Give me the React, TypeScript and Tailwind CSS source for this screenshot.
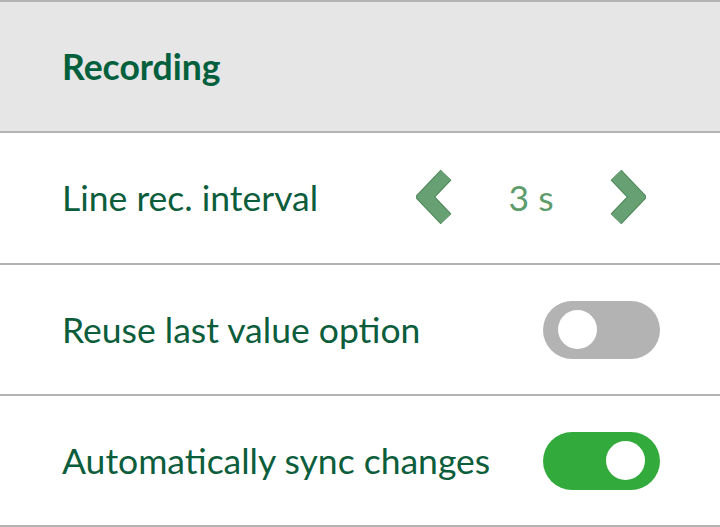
import { useState } from 'react'

function Chevron({ dir }: { dir: 'left' | 'right' }) {
  const pts = dir === 'left' ? '30,6 9,28 30,50' : '10,6 31,28 10,50'
  return (
    <svg width="40" height="58" viewBox="0 0 40 58" className="block">
      <polyline points={pts} fill="none" stroke="#4e8759" strokeWidth="15" strokeLinejoin="miter" strokeLinecap="butt" />
      <polyline points={pts} fill="none" stroke="#67a072" strokeWidth="13" strokeLinejoin="miter" strokeLinecap="butt" />
    </svg>
  )
}

function Toggle({ on, onChange }: { on: boolean; onChange: () => void }) {
  return (
    <button
      onClick={onChange}
      className={`flex h-[58px] w-[117px] items-center rounded-full px-[15px] ${on ? 'justify-end bg-[#33aa3c]' : 'justify-start bg-[#b3b3b3]'}`}
    >
      <span className="block h-[39px] w-[39px] rounded-full bg-white" />
    </button>
  )
}

export default function App() {
  const [interval, setInterval] = useState(3)
  const [reuse, setReuse] = useState(false)
  const [sync, setSync] = useState(true)

  return (
    <div className="w-[720px] h-[527px] overflow-hidden bg-white text-[#0b5d3b]" style={{ fontFamily: 'Lato, "Open Sans", sans-serif' }}>
      <div className="flex h-[133px] items-center border-y-2 border-[#b3b3b3] bg-[#e6e6e6] pl-[62px]">
        <h2 className="text-[35.5px] font-bold text-[#03603d]">Recording</h2>
      </div>

      <div className="flex h-[132px] items-center justify-between border-b-2 border-[#b3b3b3] pl-[62px] pr-[74px]">
        <span className="text-[35.5px]">Line rec. interval</span>
        <div className="flex items-center">
          <button onClick={() => setInterval(Math.max(1, interval - 1))}>
            <Chevron dir="left" />
          </button>
          <span className="w-[150px] text-center text-[35.5px] text-[#5f9c6c]">{interval} s</span>
          <button onClick={() => setInterval(interval + 1)}>
            <Chevron dir="right" />
          </button>
        </div>
      </div>

      <div className="flex h-[131px] items-center justify-between border-b-2 border-[#b3b3b3] pl-[62px] pr-[60px]">
        <span className="text-[35.5px]">Reuse last value option</span>
        <Toggle on={reuse} onChange={() => setReuse(!reuse)} />
      </div>

      <div className="flex h-[131px] items-center justify-between border-b-2 border-[#b3b3b3] pl-[62px] pr-[60px]">
        <span className="text-[35.5px]">Automatically sync changes</span>
        <Toggle on={sync} onChange={() => setSync(!sync)} />
      </div>
    </div>
  )
}
